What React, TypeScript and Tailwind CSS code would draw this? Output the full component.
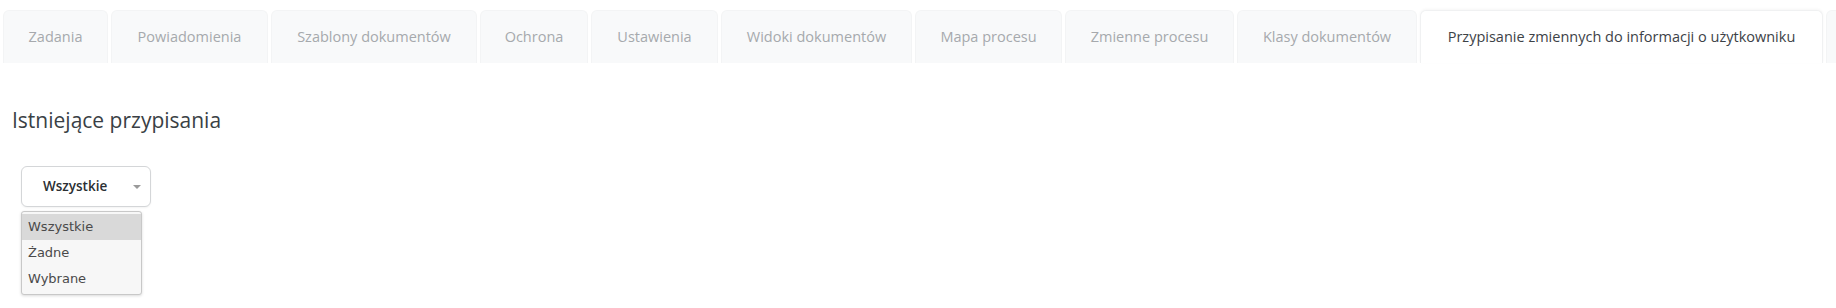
import React from "react";

const tabs: { label: string; w: string }[] = [
  { label: "Zadania", w: "w-[105px]" },
  { label: "Powiadomienia", w: "w-[157px]" },
  { label: "Szablony dokumentów", w: "w-[206px]" },
  { label: "Ochrona", w: "w-[108px]" },
  { label: "Ustawienia", w: "w-[127px]" },
  { label: "Widoki dokumentów", w: "w-[191px]" },
  { label: "Mapa procesu", w: "w-[147px]" },
  { label: "Zmienne procesu", w: "w-[169px]" },
  { label: "Klasy dokumentów", w: "w-[180px]" },
];

export default function App() {
  return (
    <div className="w-[1836px] h-[308px] bg-white overflow-hidden" style={{ fontFamily: '"Open Sans", "Noto Sans", sans-serif' }}>
      <div className="flex gap-[3px] pl-[3px] pt-[10px]">
        {tabs.map((t) => (
          <div
            key={t.label}
            className={`${t.w} h-[53px] shrink-0 flex items-center justify-center rounded-t-[6px] bg-[#f8f9fa] border border-b-0 border-[#f3f4f5] text-[14.5px] text-[#a6a9ad]`}
          >
            {t.label}
          </div>
        ))}
        <div className="w-[403px] h-[53px] shrink-0 flex items-center justify-center rounded-t-[6px] bg-white border border-b-0 border-[#f0f1f2] shadow-[0_-1px_3px_rgba(0,0,0,0.04)] text-[14.5px] text-[#3d4247]">
          Przypisanie zmiennych do informacji o użytkowniku
        </div>
        <div className="w-[20px] h-[53px] shrink-0 rounded-t-[6px] bg-[#f8f9fa] border border-b-0 border-[#f3f4f5]" />
      </div>
      <div className="pl-[12px] pt-[43px]">
        <h2 className="text-[21px] leading-[28px] text-[#3a3f45]">Istniejące przypisania</h2>
      </div>
      <div className="pl-[21px] pt-[32px]">
        <div className="w-[130px] h-[41px] rounded-[6px] border border-[#d4d6d8] bg-white flex items-center pl-[21px] pr-[9px] shadow-[0_1px_2px_rgba(0,0,0,0.05)]">
          <span className="text-[13.5px] font-semibold text-[#2b2f33] flex-1">Wszystkie</span>
          <span className="w-0 h-0 border-l-[4px] border-r-[4px] border-t-[4px] border-l-transparent border-r-transparent border-t-[#9a9a9a]" />
        </div>
        <div className="mt-[4px] w-[121px] rounded-[3px] border border-[#c8c8c8] bg-[#f7f7f7] shadow-[0_1px_3px_rgba(0,0,0,0.15)] py-[2px] text-[13px] text-[#4a4a4a]" style={{ fontFamily: '"DejaVu Sans", sans-serif' }}>
          <div className="h-[26px] flex items-center px-[6px] bg-[#d9d9d9]">Wszystkie</div>
          <div className="h-[26px] flex items-center px-[6px]">Żadne</div>
          <div className="h-[26px] flex items-center px-[6px]">Wybrane</div>
        </div>
      </div>
    </div>
  );
}
